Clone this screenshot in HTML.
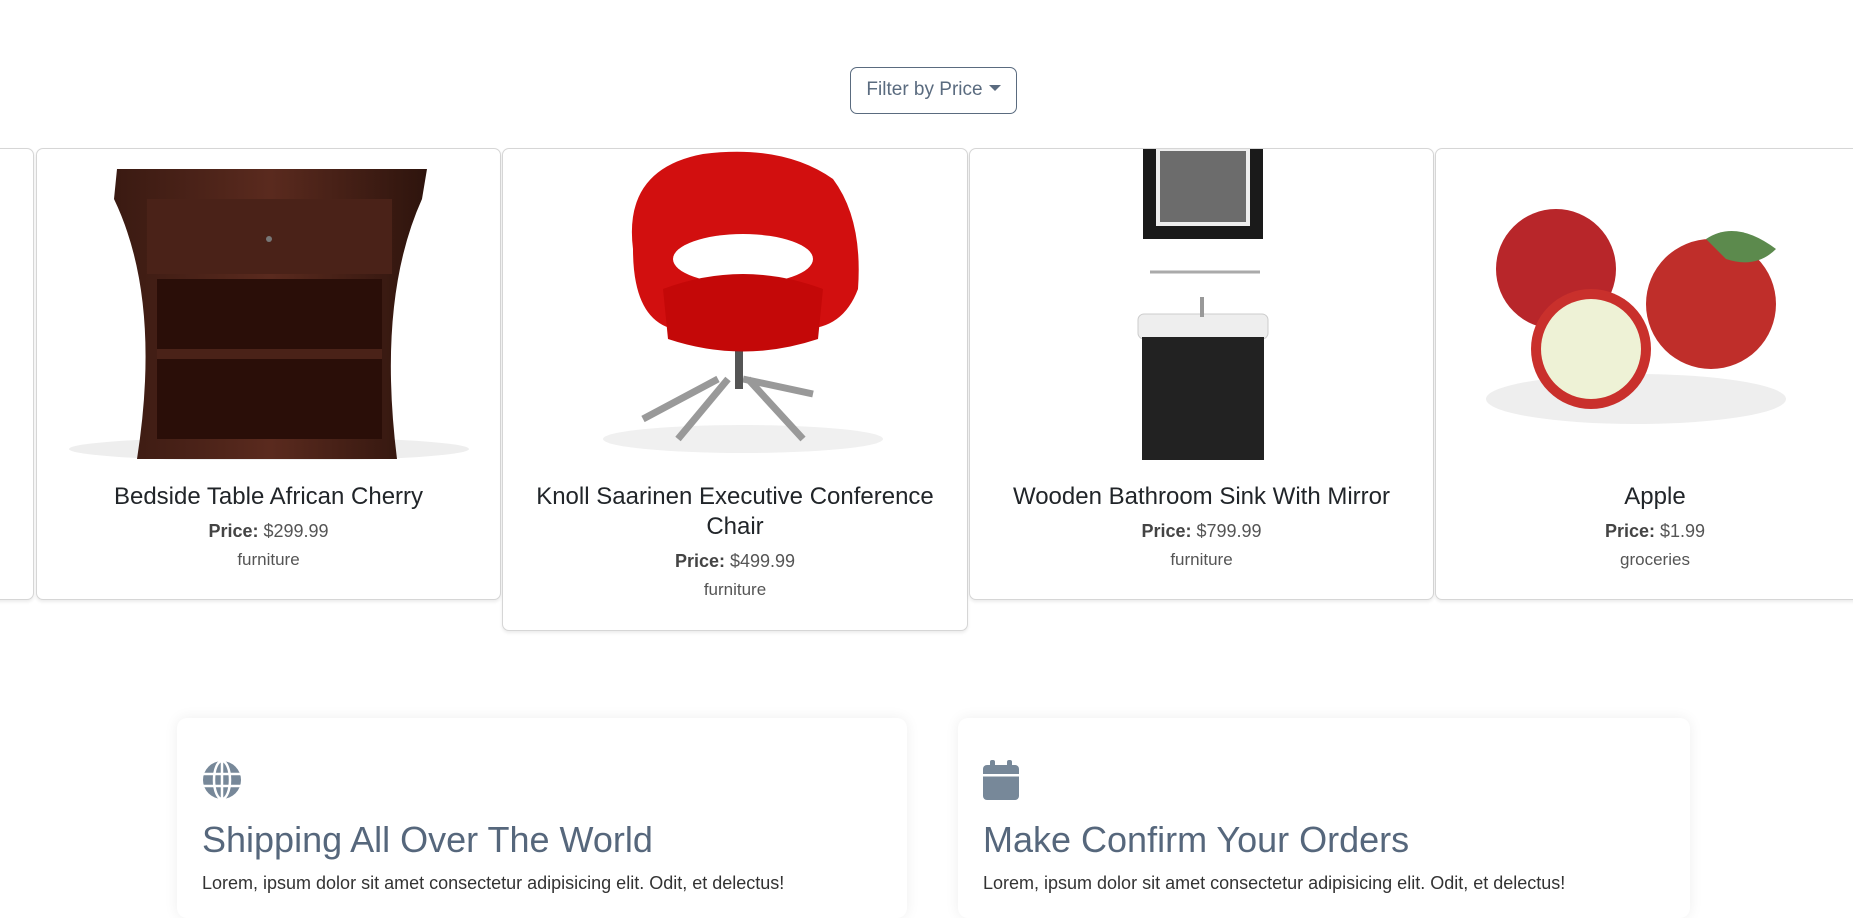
<!DOCTYPE html>
<html><head><meta charset="utf-8"><style>
*{box-sizing:border-box;margin:0;padding:0}
body{width:1853px;height:882px;overflow:hidden;background:#fff;font-family:"Liberation Sans",sans-serif;position:relative;color:#212529}
.btn{position:absolute;left:850px;top:67px;width:167px;height:47px;border:1.5px solid #5a6b7f;border-radius:7px;color:#5a6b7f;font-size:19px;line-height:44px;text-align:center}
.btn:after{content:"";display:inline-block;margin-left:6px;vertical-align:4px;border-left:6px solid transparent;border-right:6px solid transparent;border-top:6px solid #5a6b7f}
.card{position:absolute;top:148px;border:1px solid #d6d6d6;border-radius:7px;box-shadow:0 2px 3px rgba(0,0,0,.08);text-align:center;background:#fff;overflow:hidden}
.img{height:311px;position:relative}
.t{font-size:24px;margin-top:22px;line-height:30px;padding:0 20px}
.p{font-size:18px;color:#555;margin-top:9px}
.p b{color:#444}
.c{font-size:17px;color:#555;margin-top:8px}
.box{position:absolute;top:718px;height:200px;border-radius:10px;box-shadow:0 0 14px rgba(0,0,0,.07);background:#fff;padding:42px 25px}
.box h2{font-weight:normal;font-size:36px;color:#56677c;margin-top:14px}
.box p{font-size:18px;color:#333;margin-top:12px;white-space:nowrap}
</style></head><body>
<div class="btn">Filter by Price</div>
<div class="card" style="left:-10px;width:44px;height:452px"></div>
<div class="card" style="left:36px;width:465px;height:452px">
<div class="img"><svg width="465" height="311"><defs><linearGradient id="w" x1="0" x2="1"><stop offset="0" stop-color="#3a1a12"/><stop offset=".5" stop-color="#5a2a1e"/><stop offset="1" stop-color="#2e140d"/></linearGradient></defs><ellipse cx="232" cy="300" rx="200" ry="12" fill="#eee"/><path d="M80 20 L390 20 L385 50 Q340 150 360 310 L345 310 L120 310 L100 310 Q125 150 77 50Z" fill="url(#w)"/><rect x="110" y="50" width="245" height="75" fill="#4a2218"/><rect x="120" y="130" width="225" height="160" fill="#2a0e08"/><rect x="120" y="200" width="225" height="10" fill="#4a2218"/><circle cx="232" cy="90" r="3" fill="#777"/></svg></div>
<div class="t">Bedside Table African Cherry</div><div class="p"><b>Price:</b> $299.99</div><div class="c">furniture</div></div>
<div class="card" style="left:502px;width:466px;height:483px">
<div class="img"><svg width="466" height="311"><ellipse cx="240" cy="290" rx="140" ry="14" fill="#f0f0f0"/><path d="M215 230 L140 270 M245 230 L300 290 M240 230 L310 245 M225 230 L175 290" stroke="#999" stroke-width="7"/><rect x="232" y="200" width="8" height="40" fill="#555"/><path d="M130 100 Q120 20 200 5 Q280 -5 330 30 Q360 70 355 140 Q340 180 300 180 L170 180 Q130 170 130 100Z" fill="#d20f0f"/><ellipse cx="240" cy="110" rx="70" ry="25" fill="#fff"/><path d="M160 140 Q240 110 320 140 L315 190 Q240 215 165 190Z" fill="#c40808"/></svg></div>
<div class="t">Knoll Saarinen Executive Conference Chair</div><div class="p"><b>Price:</b> $499.99</div><div class="c">furniture</div></div>
<div class="card" style="left:969px;width:465px;height:452px">
<div class="img"><svg width="465" height="311"><rect x="173" y="0" width="120" height="90" fill="#1a1a1a"/><rect x="188" y="0" width="90" height="75" fill="#6c6c6c" stroke="#eee" stroke-width="4"/><line x1="180" y1="123" x2="290" y2="123" stroke="#aaa" stroke-width="3"/><rect x="168" y="165" width="130" height="25" rx="6" fill="#eee" stroke="#ccc"/><rect x="172" y="188" width="122" height="123" fill="#222"/><rect x="230" y="148" width="4" height="20" fill="#999"/></svg></div>
<div class="t">Wooden Bathroom Sink With Mirror</div><div class="p"><b>Price:</b> $799.99</div><div class="c">furniture</div></div>
<div class="card" style="left:1435px;width:440px;height:452px">
<div class="img"><svg width="440" height="311"><ellipse cx="200" cy="250" rx="150" ry="25" fill="#eee"/><circle cx="120" cy="120" r="60" fill="#b8262a"/><circle cx="275" cy="155" r="65" fill="#bf2e2a"/><path d="M270 90 Q300 70 340 100 Q320 120 290 110Z" fill="#5c8a4d"/><circle cx="155" cy="200" r="60" fill="#c9302c"/><circle cx="155" cy="200" r="50" fill="#eef2d6"/></svg></div>
<div class="t">Apple</div><div class="p"><b>Price:</b> $1.99</div><div class="c">groceries</div></div>
<div class="box" style="left:177px;width:730px">
<svg width="40" height="40" viewBox="0 0 40 40"><circle cx="20" cy="20" r="19" fill="#778899"/><g stroke="#fff" stroke-width="2.5" fill="none"><ellipse cx="20" cy="20" rx="8" ry="19"/><line x1="20" y1="1" x2="20" y2="39"/><line x1="1" y1="14" x2="39" y2="14"/><line x1="1" y1="26" x2="39" y2="26"/></g></svg>
<h2>Shipping All Over The World</h2><p>Lorem, ipsum dolor sit amet consectetur adipisicing elit. Odit, et delectus!</p></div>
<div class="box" style="left:958px;width:732px">
<svg width="36" height="40" viewBox="0 0 36 40"><rect x="0" y="5" width="36" height="35" rx="4" fill="#778899"/><rect x="0" y="14" width="36" height="2.5" fill="#fff"/><rect x="7" y="0" width="5" height="10" rx="2" fill="#778899"/><rect x="24" y="0" width="5" height="10" rx="2" fill="#778899"/></svg>
<h2>Make Confirm Your Orders</h2><p>Lorem, ipsum dolor sit amet consectetur adipisicing elit. Odit, et delectus!</p></div>
</body></html>
